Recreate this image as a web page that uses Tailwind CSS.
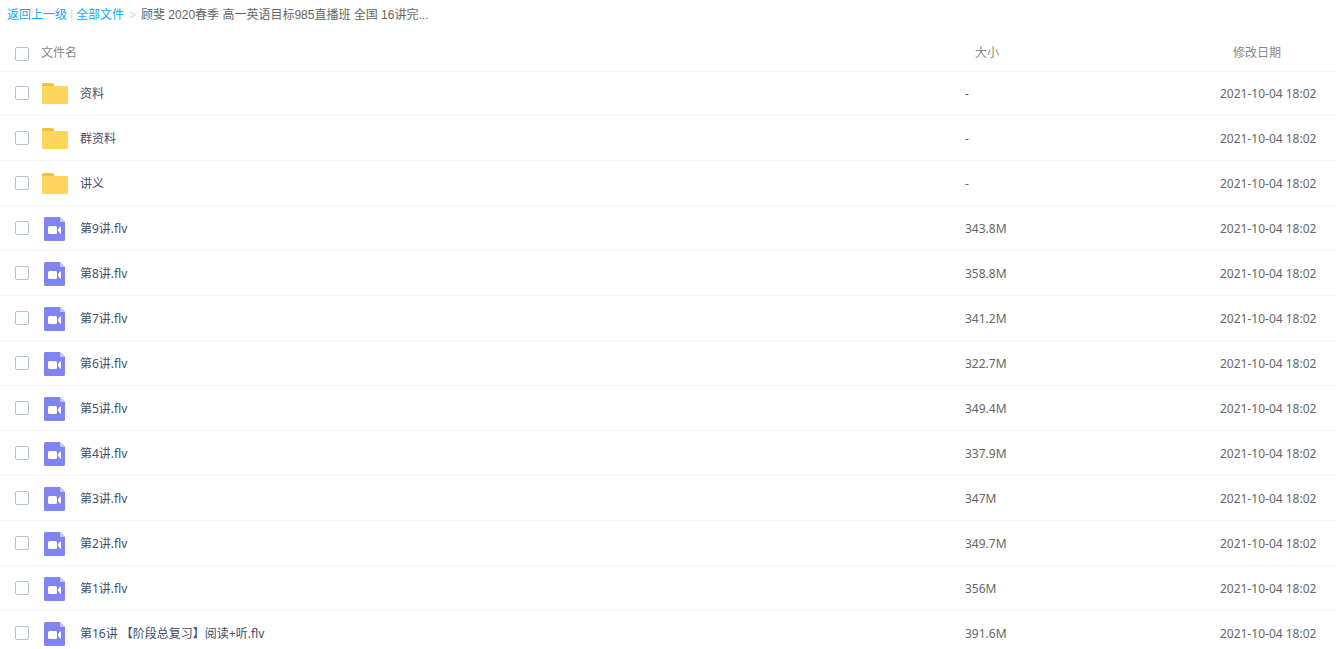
<!DOCTYPE html>
<html lang="zh-CN">
<head>
    <meta charset="UTF-8">
    <meta name="viewport" content="width=device-width, initial-scale=1.0">
    <title>全部文件</title>
    <script src="https://cdn.jsdelivr.net/npm/@tailwindcss/browser@4"></script>
</head>
<body class="bg-white text-xs text-[#666] font-['Noto_Sans','Noto_Sans_CJK_SC',sans-serif] overflow-hidden">
    <!-- 面包屑导航 -->
    <nav class="flex h-9 items-center pb-1.5 pl-[7px] font-['Liberation_Sans','Noto_Sans_CJK_SC',sans-serif] whitespace-nowrap">
      <a href="#" class="text-[#09aaff] hover:underline">返回上一级</a>
      <span class="w-[9px] text-center text-[#c4dbfe]">|</span>
      <a href="#" class="text-[#09aaff] hover:underline">全部文件</a>
      <span class="w-[17px] text-center text-[#c4dbfe]">&gt;</span>
      <span>顾斐 2020春季 高一英语目标985直播班 全国 16讲完...</span>
    </nav>

    <!-- 文件列表 -->
    <table class="w-full table-fixed border-separate border-spacing-0 text-left">
      <thead class="text-[#888]">
        <tr class="h-[35px]">
          <th class="p-0 pl-[15px] font-normal">
            <div class="flex items-center gap-3">
              <input id="checkAll" type="checkbox" class="size-3.5 appearance-none rounded-xs border border-[#b4c1d2] bg-white checked:bg-[#09aaff]">
              <label for="checkAll" class="pb-0.5">文件名</label>
            </div>
          </th>
          <th class="w-[255px] p-0 pb-0.5 pl-2.5 font-normal">大小</th>
          <th class="w-[116px] p-0 pb-0.5 pl-[13px] font-normal">修改日期</th>
        </tr>
      </thead>
      <tbody id="fileList"></tbody>
    </table>

    <template id="folderIcon">
      <svg class="h-[26px] w-[27px]" viewBox="0 0 27 26">
        <path d="M1 9V4.500Q1 3 2.500 3H11.500Q13 3 13 4.500V9Z" fill="#eebf4b"/>
        <rect x="1" y="6" width="26" height="18" rx="1" fill="#ffd65b"/>
      </svg>
    </template>
    <template id="videoIcon">
      <svg class="h-[26px] w-[27px]" viewBox="0 0 27 26">
        <path d="M4.500 2H19L24 7V24.500Q24 26 22.500 26H4.500Q3 26 3 24.500V3.500Q3 2 4.500 2Z" fill="#8183f1"/>
        <path d="M19 2L24 7H20Q19 7 19 6Z" fill="#c5c6fa"/>
        <rect x="7" y="11" width="9" height="8" rx="1.500" fill="#fff"/>
        <path d="M17 14.200L19 11.600Q20 11 20 12V18Q20 19 19 18.400L17 15.800Z" fill="#fff"/>
      </svg>
    </template>

    <script>
      const files = [
        { name: '资料', size: '-', folder: true },
        { name: '群资料', size: '-', folder: true },
        { name: '讲义', size: '-', folder: true },
        { name: '第9讲.flv', size: '343.8M' },
        { name: '第8讲.flv', size: '358.8M' },
        { name: '第7讲.flv', size: '341.2M' },
        { name: '第6讲.flv', size: '322.7M' },
        { name: '第5讲.flv', size: '349.4M' },
        { name: '第4讲.flv', size: '337.9M' },
        { name: '第3讲.flv', size: '347M' },
        { name: '第2讲.flv', size: '349.7M' },
        { name: '第1讲.flv', size: '356M' },
        { name: '第16讲 【阶段总复习】阅读+听.flv', size: '391.6M' }
      ];
      const date = '2021-10-04 18:02';
      const folderIcon = document.getElementById('folderIcon').innerHTML;
      const videoIcon = document.getElementById('videoIcon').innerHTML;

      document.getElementById('fileList').innerHTML = files.map((file, i) => `
        <tr class="group h-[45px] hover:bg-[#f5faff]">
          <td class="border-b border-[#f2f6fd] p-0 pl-[15px] group-first:border-t group-first:pb-px">
            <div class="flex items-center gap-3">
              <input type="checkbox" aria-labelledby="file${i}" class="size-3.5 appearance-none rounded-xs border border-[#b4c1d2] bg-white checked:bg-[#09aaff]">
              ${file.folder ? folderIcon : videoIcon}
              <a href="#" id="file${i}" class="pt-0.5 text-[#424e67] hover:text-[#09aaff]">${file.name}</a>
            </div>
          </td>
          <td class="border-b border-[#f2f6fd] p-0 pt-0.5 group-first:border-t group-first:pb-px">${file.size}</td>
          <td class="border-b border-[#f2f6fd] p-0 pt-0.5 group-first:border-t group-first:pb-px">${date}</td>
        </tr>
      `).join('');

      // 全选
      document.getElementById('checkAll').addEventListener('change', function(e) {
        document.querySelectorAll('#fileList input').forEach(box => box.checked = e.target.checked);
      });
    </script>
</body>
</html>
